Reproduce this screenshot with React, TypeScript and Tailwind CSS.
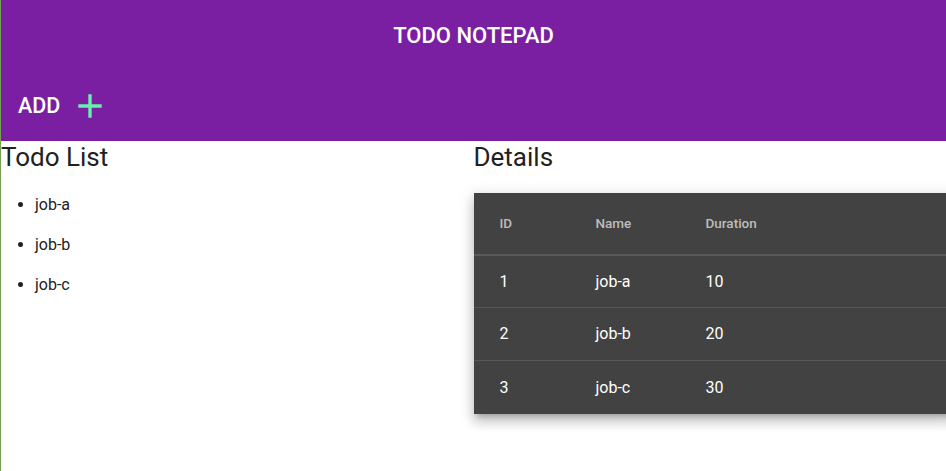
import React from 'react';

interface Todo {
  id: number;
  name: string;
  duration: number;
}

const todos: Todo[] = [
  { id: 1, name: 'job-a', duration: 10 },
  { id: 2, name: 'job-b', duration: 20 },
  { id: 3, name: 'job-c', duration: 30 },
];

function PlusIcon() {
  return (
    <svg width="40" height="40" viewBox="0 0 24 24" className="fill-[#69f0ae]">
      <path d="M19 13h-6v6h-2v-6H5v-2h6V5h2v6h6v2z" />
    </svg>
  );
}

export default function App() {
  return (
    <div
      className="min-h-screen h-[471px] border-l border-[#76a05a] bg-white text-[#212121]"
      style={{ fontFamily: 'Roboto, "Liberation Sans", sans-serif' }}
    >
      <header className="bg-[#7b1fa2] text-white">
        <div className="h-[70px] flex items-center justify-center pt-[2px]">
          <h1 className="text-[22px] font-medium leading-none">TODO NOTEPAD</h1>
        </div>
        <div className="h-[71px] flex items-center pl-[17px]">
          <span className="text-[21.5px] font-medium leading-none">ADD</span>
          <span className="ml-[10px] flex items-center">
            <PlusIcon />
          </span>
        </div>
      </header>

      <div className="flex">
        {/* left column */}
        <div className="w-1/2">
          <h2 className="text-[26px] leading-[32px]">Todo List</h2>
          <ul className="list-disc pl-[34px] mt-[12px] text-[16px]">
            {todos.map((t) => (
              <li key={t.id} className="py-2 leading-[24px]">
                {t.name}
              </li>
            ))}
          </ul>
        </div>

        {/* right column */}
        <div className="w-1/2 overflow-visible">
          <h2 className="text-[26px] leading-[32px]">Details</h2>
          <div className="mt-[20px] w-[480px] bg-[#424242] text-white shadow-[0_5px_5px_-3px_rgba(0,0,0,0.2),0_8px_10px_1px_rgba(0,0,0,0.14),0_3px_14px_2px_rgba(0,0,0,0.12)]">
            <div className="flex h-[63px] items-center border-b-2 border-[#5a5a5a] text-[13.5px] font-medium text-[#bdbdbd]">
              <div className="w-[122px] pl-[26px]">ID</div>
              <div className="w-[110px]">Name</div>
              <div className="flex-1">Duration</div>
            </div>
            {todos.map((t, i) => (
              <div
                key={t.id}
                className={
                  i === 0
                    ? 'flex h-[52px] items-center border-b border-[#575757] text-[16px]'
                    : i === 1
                      ? 'flex h-[53px] items-center border-b border-[#575757] text-[16px]'
                      : 'flex h-[53px] items-center text-[16px]'
                }
              >
                <div className="w-[122px] pl-[26px]">{t.id}</div>
                <div className="w-[110px]">{t.name}</div>
                <div className="flex-1">{t.duration}</div>
              </div>
            ))}
          </div>
        </div>
      </div>
    </div>
  );
}
